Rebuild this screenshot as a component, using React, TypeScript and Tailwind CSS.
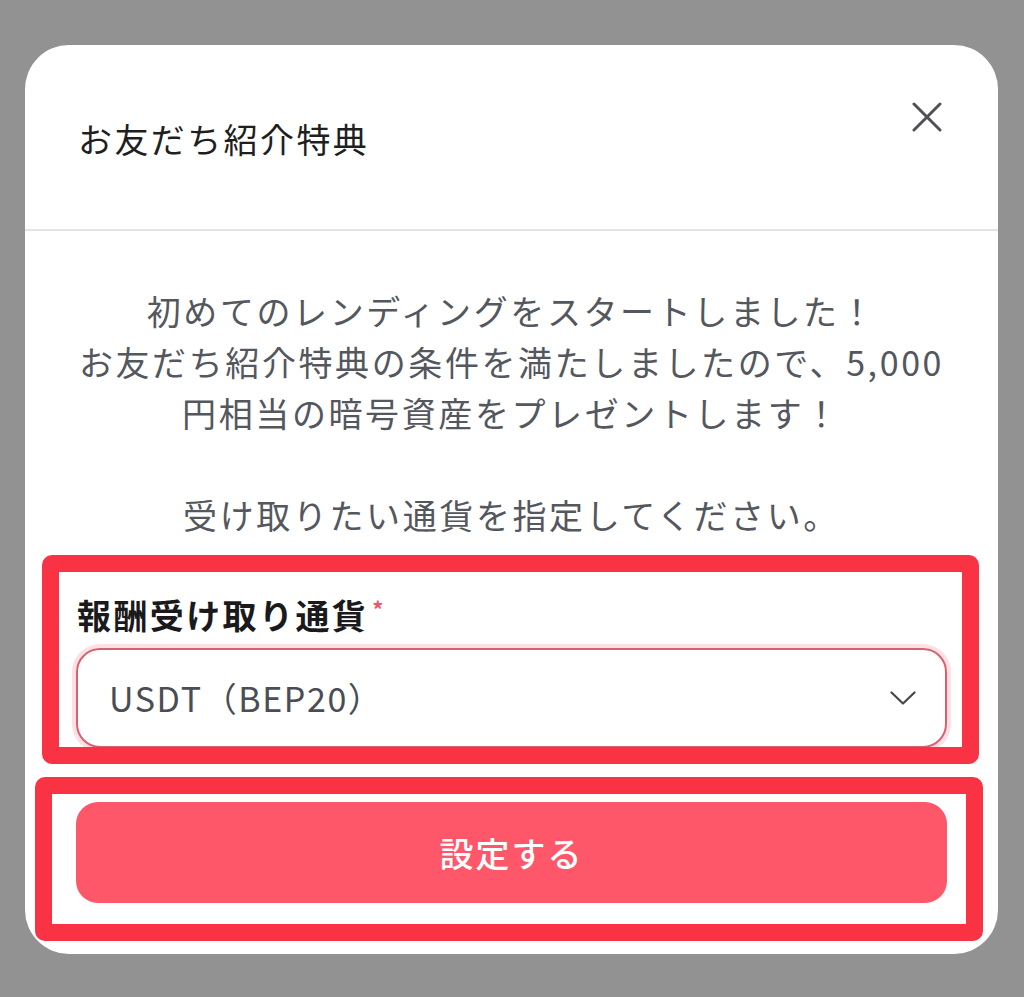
export default function App() {
	return (
		<div className="h-[997px] w-full overflow-hidden bg-[#929292] pt-[45px] font-['Noto_Sans_CJK_JP',sans-serif]">
			<div className="relative ml-[25px] flex h-[909px] w-[973px] flex-col rounded-[44px] bg-white">
				{/* header */}
				<header className="flex h-[186px] items-start justify-between border-b-2 border-[#e4e4e6] pl-[53px] pr-[56px] pt-[57px]">
					<h2 className="mt-[17px] text-[34px] leading-[40px] tracking-[2.4px] text-[#1f1f22]">
						お友だち紹介特典
					</h2>
					<button aria-label="閉じる" className="h-[30px] w-[30px]">
						<svg viewBox="0 0 30 30" className="h-[30px] w-[30px]" fill="none">
							<path
								d="M2 2L28 28M28 2L2 28"
								stroke="#505057"
								strokeWidth="3"
								strokeLinecap="round"
							/>
						</svg>
					</button>
				</header>

				{/* body */}
				<div className="flex flex-1 flex-col px-[51px] pb-[51px] pt-[54px]">
					<p className="whitespace-nowrap text-center text-[34px] leading-[51px] tracking-[2.6px] text-[#55575e]">
						初めてのレンディングをスタートしました！
						<br />
						お友だち紹介特典の条件を満たしましたので、5,000
						<br />
						円相当の暗号資産をプレゼントします！
						<br />
						<br />
						受け取りたい通貨を指定してください。
					</p>

					<label className="mt-[55px] flex items-start pl-[1px] text-[34px] font-bold leading-[40px] tracking-[2.4px] text-[#1a1a1c]">
						報酬受け取り通貨
						<span className="ml-[4px] mt-[2px] text-[22px] leading-[22px] text-[#e8586a]">*</span>
					</label>

					<div className="mt-[13px] flex h-[100px] items-center justify-between rounded-[24px] border-2 border-[#d9606e] pl-[31px] pr-[29px] shadow-[0_0_0_4px_#fde0e3]">
						<span className="text-[34px] leading-[40px] tracking-[1.6px] text-[#4a4d55]">
							USDT（BEP20）
						</span>
						<svg viewBox="0 0 26 14" className="h-[14px] w-[26px]" fill="none">
							<path
								d="M1.5 1.5L13 12.5L24.5 1.5"
								stroke="#45474d"
								strokeWidth="2.2"
								strokeLinecap="round"
								strokeLinejoin="round"
							/>
						</svg>
					</div>

					<button className="mt-[54px] flex h-[101px] w-full items-center justify-center rounded-[22px] bg-[#fd5769] text-[34px] font-medium leading-[40px] tracking-[2px] text-white">
						設定する
					</button>
				</div>

				{/* annotation boxes */}
				<div className="pointer-events-none absolute left-[17px] top-[510px] h-[209px] w-[937px] rounded-[10px] border-[17px] border-[#f93343]" />
				<div className="pointer-events-none absolute left-[10px] top-[732px] h-[164px] w-[948px] rounded-[10px] border-[17px] border-[#f93343]" />
			</div>
		</div>
	);
}
